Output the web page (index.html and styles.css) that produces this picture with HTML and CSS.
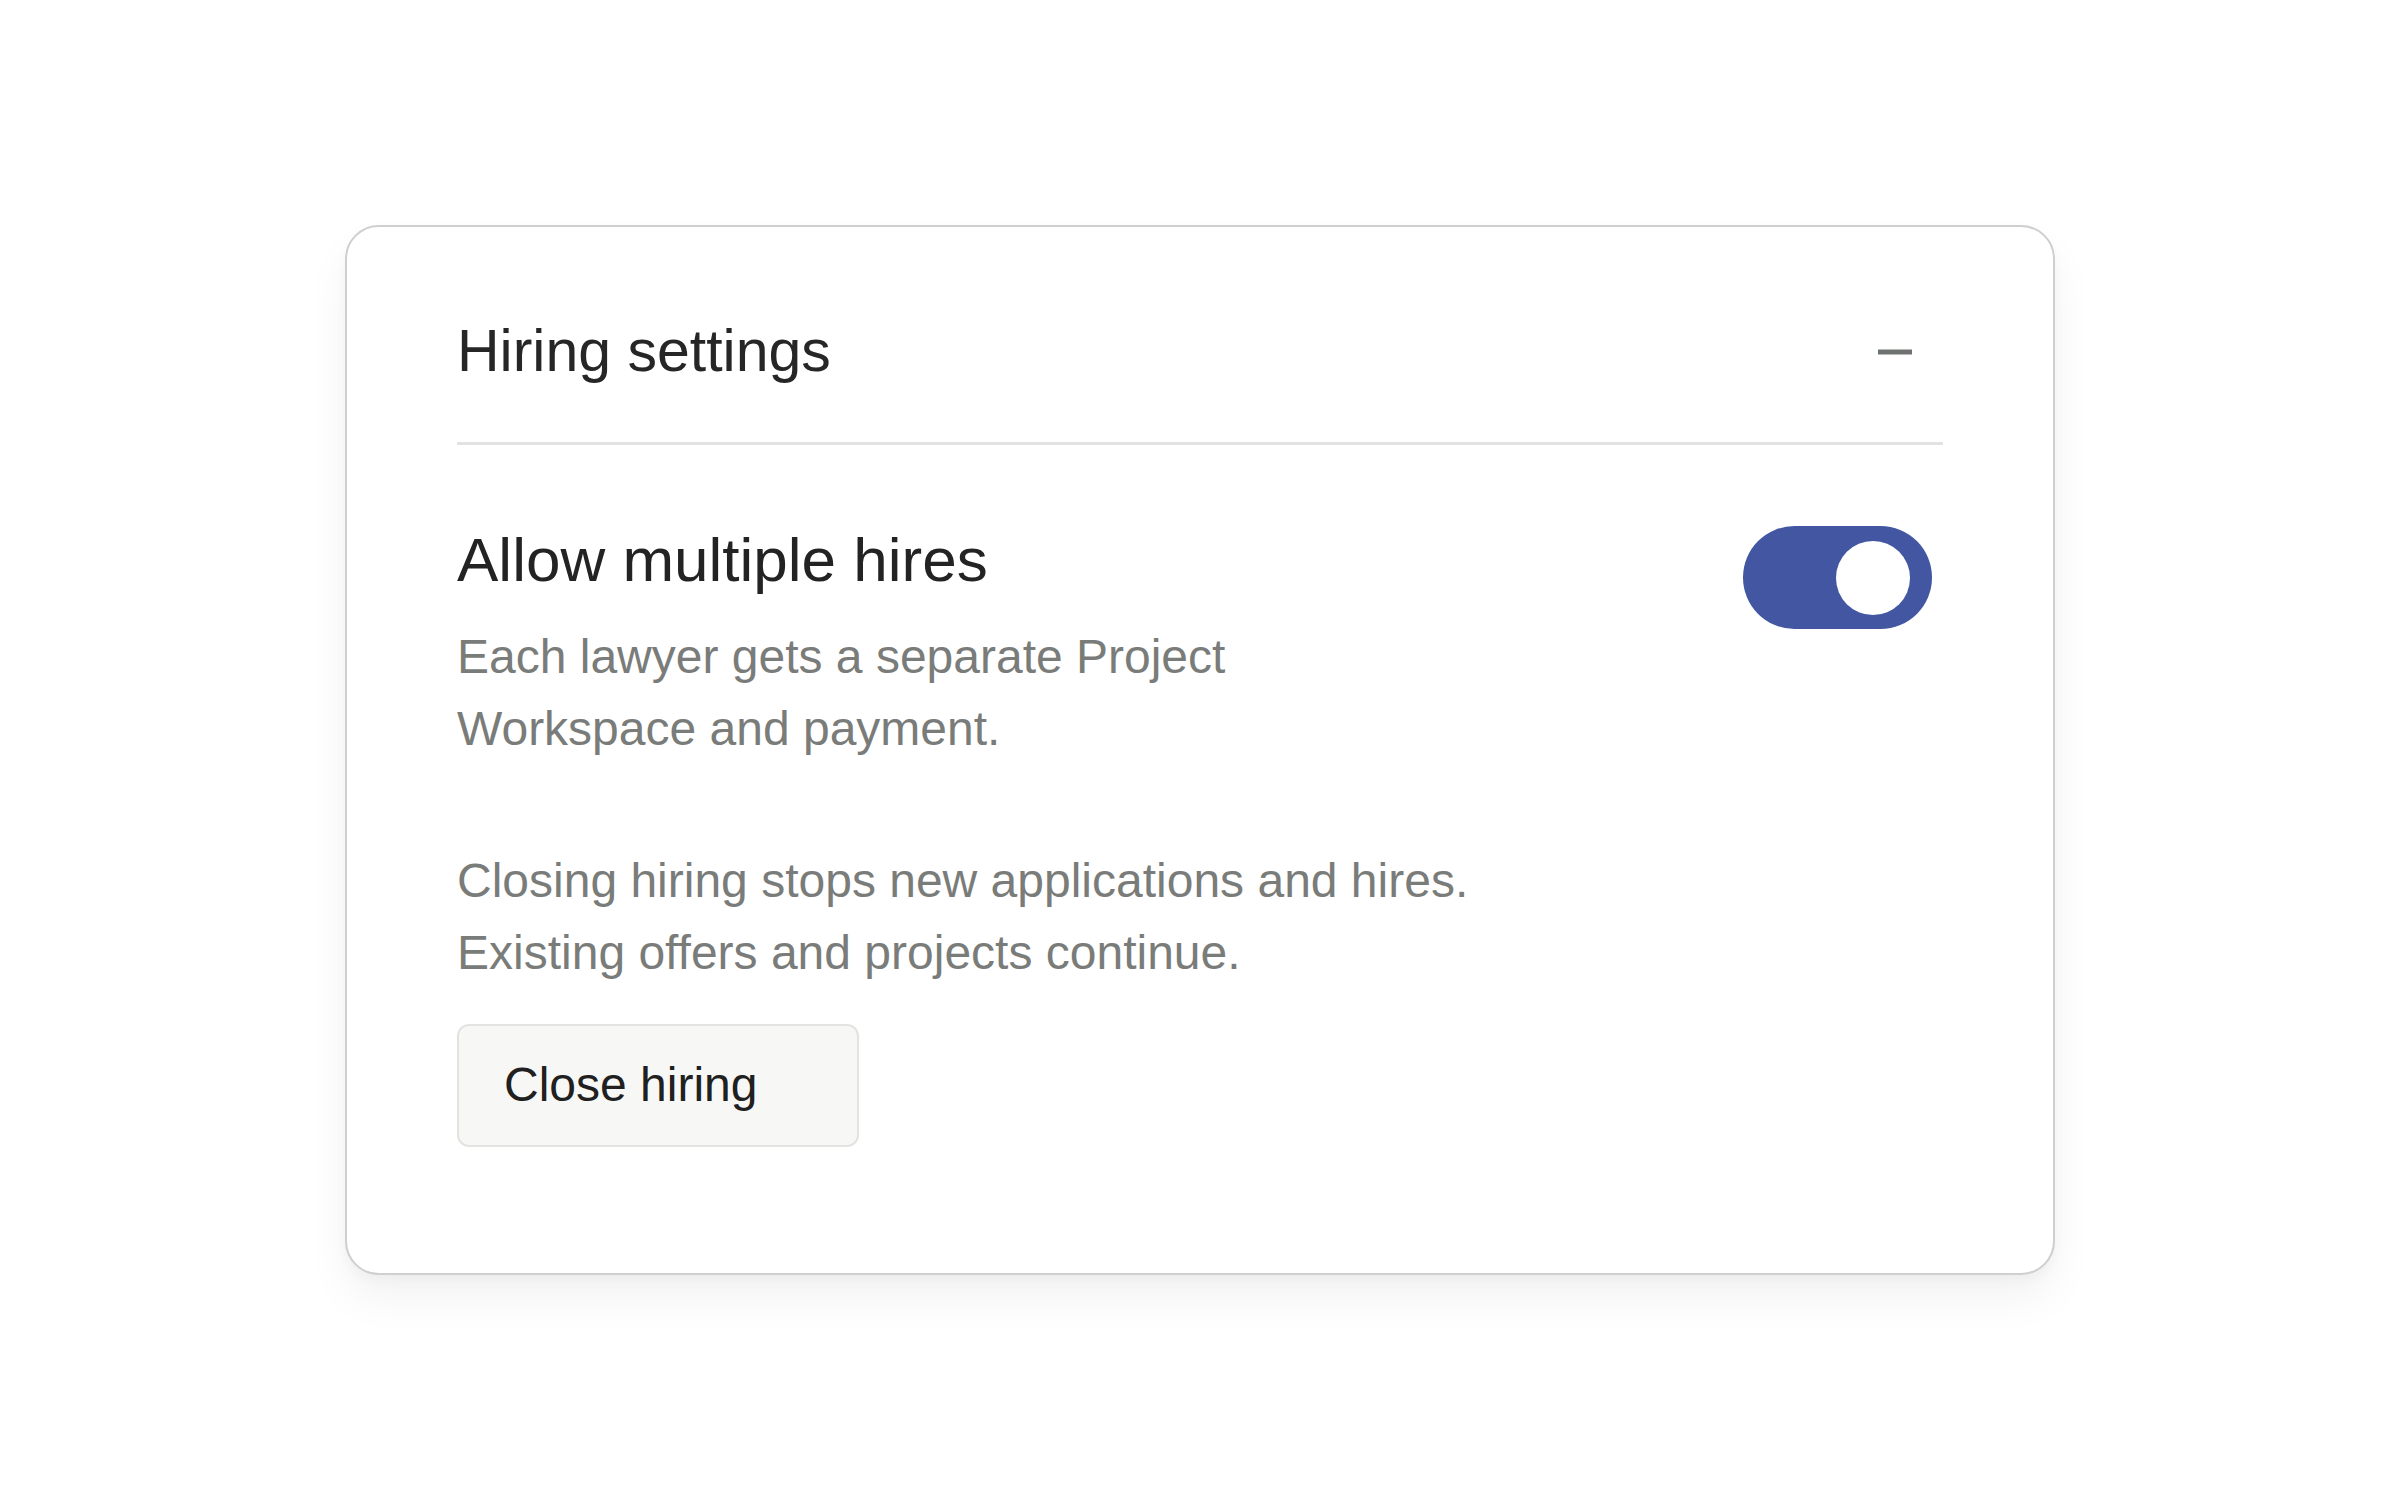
FILE: index.html
```html
<!DOCTYPE html>
<html lang="en">

<head>
  <meta charset="UTF-8">
  <meta name="viewport" content="width=device-width, initial-scale=1.0">
  <title>Hiring settings</title>
  <link rel="stylesheet" href="styles.css">
</head>

<body>
  <div class="hiring-card">
    <div class="hiring-header">
      <h2>Hiring settings</h2>
      <button class="collapse-btn" aria-label="Collapse">
        <svg width="34" height="6" viewBox="0 0 34 6">
          <rect x="0" y="0.5" width="34" height="5" fill="#6f736f" />
        </svg>
      </button>
    </div>

    <div class="setting-row">
      <div class="setting-label">
        <h3>Allow multiple hires</h3>
        <p>Each lawyer gets a separate Project<br>Workspace and payment.</p>
      </div>
      <label class="toggle-switch">
        <input type="checkbox" id="multiple-hires" checked>
        <span class="toggle-slider"></span>
      </label>
    </div>

    <p class="close-note">Closing hiring stops new applications and hires.<br>Existing offers and projects continue.</p>
    <button class="btn-close" id="btn-close-hiring">Close hiring</button>
  </div>
</body>

</html>
```

FILE: styles.css
```css
* {
  margin: 0;
  padding: 0;
  box-sizing: border-box;
}

body {
  font-family: 'Liberation Sans', Arial, Helvetica, sans-serif;
  background-color: #fff;
  color: #252525;
  min-height: 100vh;
  display: flex;
  align-items: center;
  justify-content: center;
}

.hiring-card {
  width: 1710px;
  background-color: #fff;
  border: 2px solid #cfcfcf;
  border-radius: 34px;
  padding: 89px 110px 126px;
  box-shadow: 0 24px 44px rgba(0, 0, 0, 0.05), 0 6px 12px rgba(0, 0, 0, 0.03);
}

.hiring-header {
  display: flex;
  justify-content: space-between;
  align-items: center;
  padding-bottom: 55px;
  border-bottom: 3px solid #e2e2e2;
}

.hiring-header h2 {
  font-size: 59px;
  font-weight: 400;
  line-height: 1.2;
  color: #262626;
}

.collapse-btn {
  display: flex;
  border: none;
  background: none;
  cursor: pointer;
  margin-right: 31px;
}

.setting-row {
  display: flex;
  justify-content: space-between;
  align-items: flex-start;
  margin-top: 78px;
}

.setting-label h3 {
  font-size: 62px;
  font-weight: 400;
  line-height: 1.2;
  color: #232323;
  margin-bottom: 23px;
}

.setting-label p,
.close-note {
  font-size: 48px;
  line-height: 72px;
  color: #7a7c7a;
}

.close-note {
  margin-top: 80px;
}

.toggle-switch {
  position: relative;
  display: inline-block;
  width: 189px;
  height: 103px;
  margin-top: 3px;
  margin-right: 11px;
}

.toggle-switch input {
  opacity: 0;
  width: 0;
  height: 0;
}

.toggle-slider {
  position: absolute;
  cursor: pointer;
  top: 0;
  left: 0;
  right: 0;
  bottom: 0;
  background-color: #c9c9c9;
  border-radius: 52px;
  transition: 0.3s ease;
}

.toggle-slider:before {
  position: absolute;
  content: "";
  width: 74px;
  height: 74px;
  left: 18px;
  top: 15px;
  background-color: #fff;
  border-radius: 50%;
  transition: 0.3s ease;
}

input:checked+.toggle-slider {
  background-color: #4256a2;
}

input:checked+.toggle-slider:before {
  transform: translateX(75px);
}

.btn-close {
  display: flex;
  align-items: center;
  width: 402px;
  height: 123px;
  margin-top: 35px;
  padding-left: 45px;
  font-family: inherit;
  font-size: 48px;
  line-height: 1.2;
  color: #202020;
  background-color: #f7f7f5;
  border: 2px solid #e3e3e1;
  border-radius: 12px;
  cursor: pointer;
}
```
